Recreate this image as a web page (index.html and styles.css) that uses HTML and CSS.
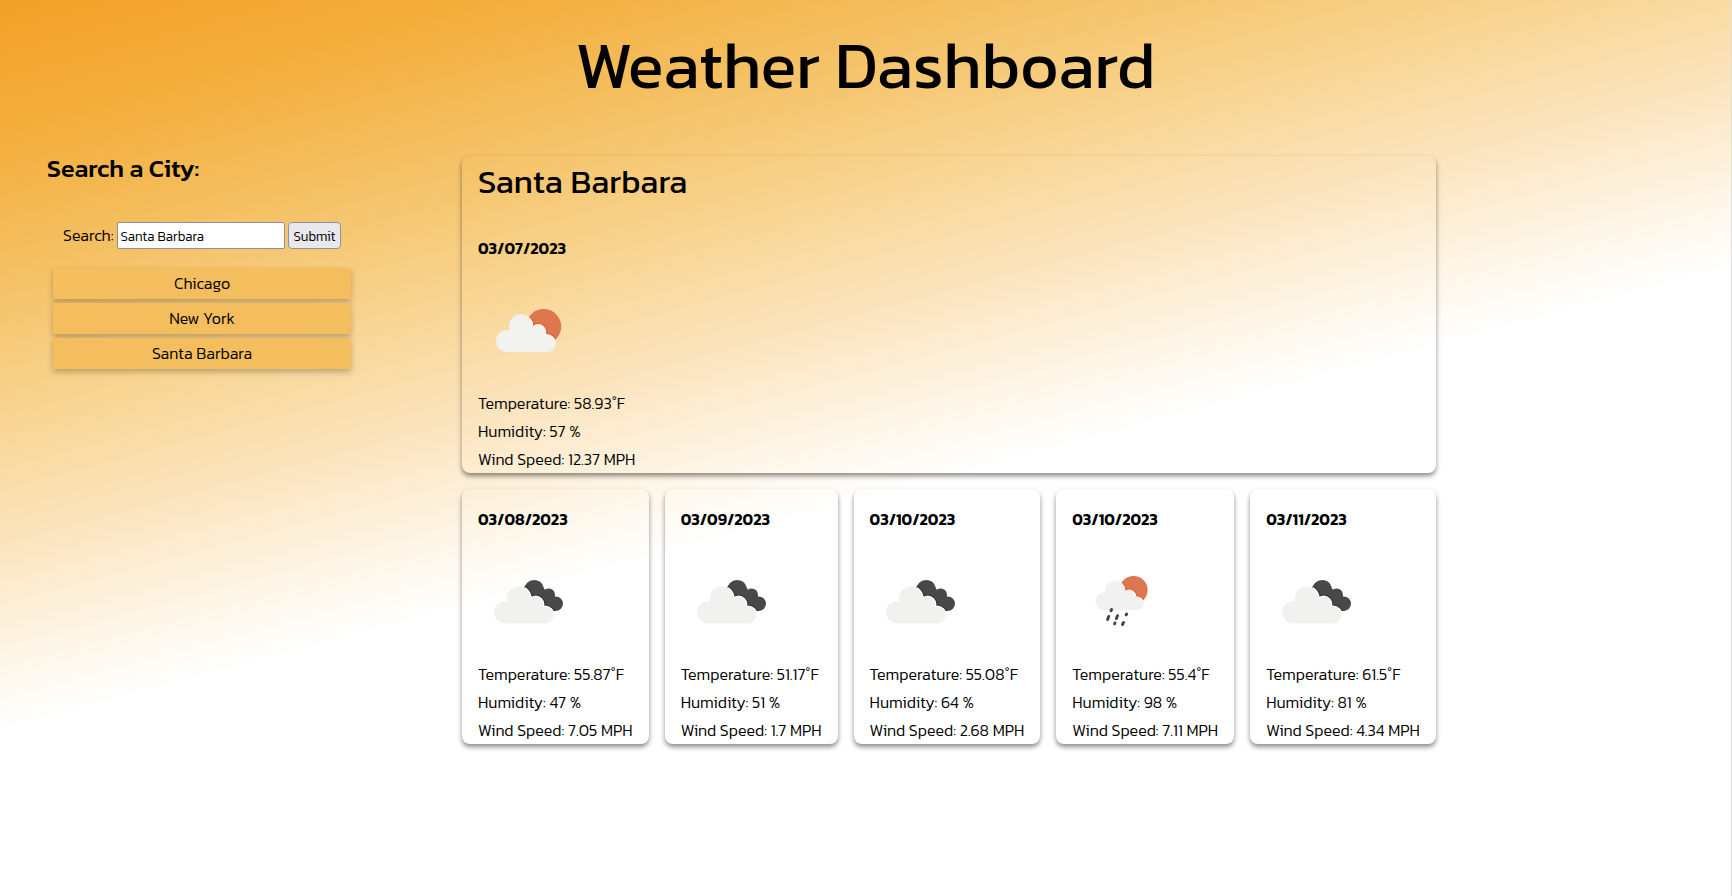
FILE: index.html
```html
<!DOCTYPE html>
<html lang="en">
<head>
<meta charset="utf-8">
<title>Weather Dashboard</title>
<link rel="stylesheet" href="styles.css">
</head>
<body>
<svg class="sprites" aria-hidden="true">
  <defs>
    <clipPath id="sun-clip"><circle cx="65.7" cy="46.5" r="17.5"/></clipPath>
    <clipPath id="dark-clip">
      <circle cx="56" cy="39" r="10"/><circle cx="70.700" cy="43.700" r="6.300"/><circle cx="77.700" cy="52.700" r="7.300"/>
      <path d="M46 39L65 35L67 39L74 46L78 60L57 59Z"/>
    </clipPath>
    <clipPath id="rain-clip"><circle cx="61.6" cy="39" r="14"/></clipPath>
    <g id="few-cloud">
      <circle cx="43" cy="46.3" r="12"/><circle cx="29" cy="61" r="11"/><circle cx="60.300" cy="52" r="7.500"/><circle cx="69" cy="63.300" r="8.700"/>
      <path d="M29 72H69V58H55V50H31L29 60Z"/>
    </g>
    <g id="broken-cloud">
      <circle cx="40.7" cy="47.5" r="12"/><circle cx="27" cy="61.300" r="11"/><circle cx="57.700" cy="53.300" r="7.700"/><circle cx="67" cy="64" r="8.500"/>
      <path d="M27 72.300H67V58H52V52H28Z"/>
    </g>
    <g id="rain-cloud">
      <circle cx="43" cy="39.5" r="10"/><circle cx="32.500" cy="50.300" r="9"/><circle cx="57.300" cy="45.500" r="6.500"/><circle cx="65" cy="52.600" r="6.700"/>
      <path d="M32 59.300H65V50H52V42H34Z"/>
    </g>
  </defs>
  <symbol id="few-clouds" viewBox="0 0 100 100">
    <circle cx="65.700" cy="46.500" r="17.500" fill="#de7650"/>
    <g clip-path="url(#sun-clip)">
      <use href="#few-cloud" fill="#e65c35" stroke="#e65c35" stroke-width="3"/>
      <use href="#few-cloud" fill="#fbeee4" stroke="#fbeee4" stroke-width="1"/>
    </g>
    <use href="#few-cloud" fill="#f2f2f0"/>
  </symbol>
  <symbol id="broken-clouds" viewBox="0 0 100 100">
    <g clip-path="url(#dark-clip)">
      <rect width="100" height="100" fill="#484849"/>
      <use href="#broken-cloud" fill="#303033" stroke="#303033" stroke-width="4"/>
      <use href="#broken-cloud" fill="#fff" stroke="#fff" stroke-width="2"/>
    </g>
    <use href="#broken-cloud" fill="#f1f1ef"/>
  </symbol>
  <symbol id="rain" viewBox="0 0 100 100">
    <circle cx="61.600" cy="39" r="14" fill="#de7650"/>
    <g clip-path="url(#rain-clip)">
      <use href="#rain-cloud" fill="#e65c35" stroke="#e65c35" stroke-width="3"/>
      <use href="#rain-cloud" fill="#fff" stroke="#fff" stroke-width="1"/>
    </g>
    <use href="#rain-cloud" fill="#f1f1f1"/>
    <path d="M39.600 58.500L39 59.700M36.700 65.500L35.600 68.500M45.500 64.700L44.400 67.500M42.900 72L42.600 72.800M54.600 63L54.200 63.800M51.500 71.500L50.500 73.500" fill="none" stroke="#47474a" stroke-width="3" stroke-linecap="round"/>
  </symbol>
</svg>
<header class="page-header"><h1>Weather Dashboard</h1></header>
<div class="layout">
  <aside class="sidebar">
    <h2>Search a City:</h2>
    <form class="search">
      <label for="city">Search:</label>
      <input id="city" type="text" value="Santa Barbara">
      <button type="submit">Submit</button>
    </form>
    <div class="history">
      <button type="button">Chicago</button>
      <button type="button">New York</button>
      <button type="button">Santa Barbara</button>
    </div>
  </aside>
  <main class="weather">
    <section class="card today">
      <h2>Santa Barbara</h2>
      <h3>03/07/2023</h3>
      <svg class="icon"><use href="#few-clouds"/></svg>
      <p>Temperature: 58.93˚F</p><p>Humidity: 57 %</p><p>Wind Speed: 12.37 MPH</p>
    </section>
    <section class="forecast">
      <article class="card">
        <h3>03/08/2023</h3>
        <svg class="icon"><use href="#broken-clouds"/></svg>
        <p>Temperature: 55.87˚F</p><p>Humidity: 47 %</p><p>Wind Speed: 7.05 MPH</p>
      </article>
      <article class="card">
        <h3>03/09/2023</h3>
        <svg class="icon"><use href="#broken-clouds"/></svg>
        <p>Temperature: 51.17˚F</p><p>Humidity: 51 %</p><p>Wind Speed: 1.7 MPH</p>
      </article>
      <article class="card">
        <h3>03/10/2023</h3>
        <svg class="icon"><use href="#broken-clouds"/></svg>
        <p>Temperature: 55.08˚F</p><p>Humidity: 64 %</p><p>Wind Speed: 2.68 MPH</p>
      </article>
      <article class="card">
        <h3>03/10/2023</h3>
        <svg class="icon"><use href="#rain"/></svg>
        <p>Temperature: 55.4˚F</p><p>Humidity: 98 %</p><p>Wind Speed: 7.11 MPH</p>
      </article>
      <article class="card">
        <h3>03/11/2023</h3>
        <svg class="icon"><use href="#broken-clouds"/></svg>
        <p>Temperature: 61.5˚F</p><p>Humidity: 81 %</p><p>Wind Speed: 4.34 MPH</p>
      </article>
    </section>
  </main>
</div>
</body>
</html>
```
FILE: styles.css
```css
* { box-sizing: border-box; }

body {
  margin: 0;
  min-height: 100vh;
  border-right: 1px solid #dedede;
  background: linear-gradient(165deg, #f3a028 0%, #f4ae3c 10%, #f4be5e 19%, #f8d592 31%, #fbe4bd 40%, #fef5e5 48%, #fff 54%);
  color: #000;
  font: 300 16px/24px Kanit, Inter, "Open Sans", sans-serif;
}

h1, h2, h3, p { margin: 0; }

.sprites { position: absolute; width: 0; height: 0; }

.page-header { padding: 17px 16px 15px; text-align: center; }
.page-header h1 { font-size: 66px; line-height: 96px; font-weight: 400; }

.layout {
  display: grid;
  grid-template-columns: 310px max-content;
  column-gap: 105px;
  padding: 28px 47px;
}

.sidebar h2 { font-size: 25px; line-height: 24px; font-weight: 500; }

.search {
  display: flex;
  align-items: center;
  gap: 3px;
  margin: 42px 0 19px 16px;
}
.search label { padding-bottom: 2px; }
.search input,
.search button {
  height: 27px;
  border: 1px solid #8f8f9d;
  color: #000;
  font-family: Kanit, Inter, sans-serif;
  font-weight: 300;
}
.search input {
  width: 168px;
  padding: 0 3px;
  border-radius: 2px;
  background: #fff;
}
.search button {
  padding: 0 5px;
  border-radius: 4px;
  background: #e9e9ed;
}

.history { display: grid; gap: 4px; padding: 0 6px; }
.history button {
  height: 31px;
  padding: 0 0 2px;
  border: 0;
  background: #f4be5e;
  box-shadow: 0 3px 6px rgba(0, 0, 0, .25);
  color: #000;
  font: 300 16px Kanit, Inter, sans-serif;
}

.card {
  padding: 0 16px 2px;
  border-radius: 8px;
  box-shadow: 0 3px 5px rgba(0, 0, 0, .45);
  white-space: nowrap;
}
.card h3 { padding: 18px 0 20px; font-size: 16px; font-weight: 600; }
.card p + p { padding-top: 4px; }

.today h2 { padding: 6px 0 16px; font-size: 33px; line-height: 40px; font-weight: 400; }

.icon { display: block; width: 100px; height: 100px; margin: 0 0 11px; }

.forecast { display: flex; gap: 16px; margin-top: 16px; }
```
